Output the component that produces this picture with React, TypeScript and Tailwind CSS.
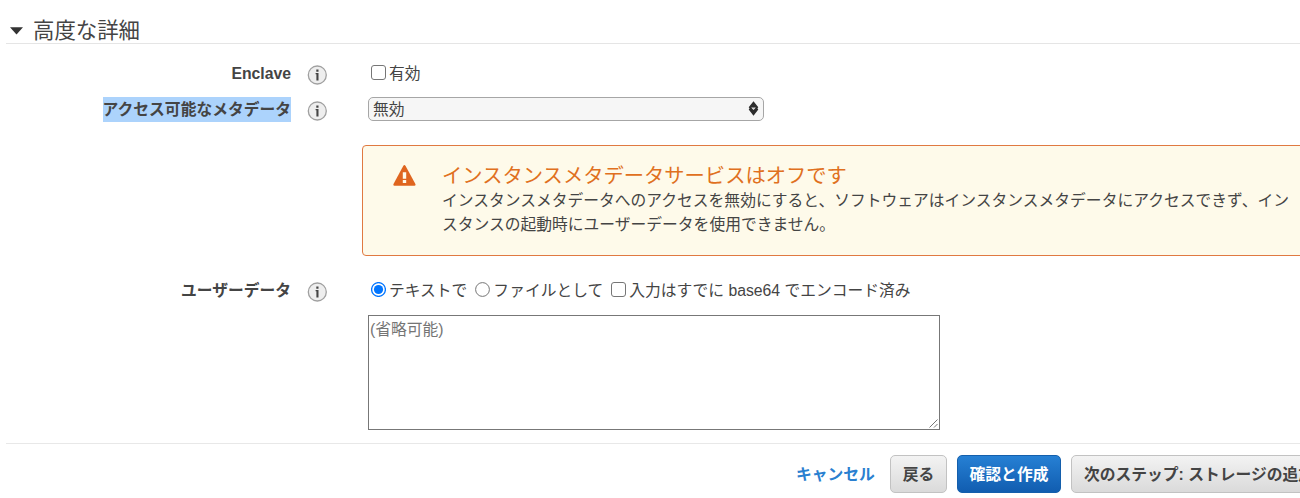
import type { ReactNode } from "react";

function InfoIcon() {
  return (
    <svg className="mt-[3px] ml-4 size-5 shrink-0" viewBox="0 0 20 20" aria-hidden="true">
      <circle cx="10.3" cy="10" r="9" fill="#eeeeee" stroke="#a0a0a0" strokeWidth="1.3" />
      <path d="M8.6 8h2.9v7.4H9.4V9.2H8.6zM9.3 4.6h2.2v2.1H9.3z" fill="#444444" />
    </svg>
  );
}

function Label({ children, selected = false }: { children: ReactNode; selected?: boolean }) {
  return (
    <div className="flex w-[368px] shrink-0 items-center">
      <div className="flex w-[291px] shrink-0 justify-end">
        <span className={selected ? "h-[25px] bg-[#acd3fc] font-bold" : "h-[25px] font-bold"}>{children}</span>
      </div>
      <InfoIcon />
    </div>
  );
}

function CheckBox() {
  return <span className="mb-[2px] box-border size-[15px] shrink-0 rounded-[3px] border border-[#767676] bg-white" />;
}

function Radio({ checked = false }: { checked?: boolean }) {
  return (
    <svg className="mb-[2px] size-[15px] shrink-0" viewBox="0 0 15 15" aria-hidden="true">
      <circle cx="7.5" cy="7.5" r="6.9" fill="#fff" stroke={checked ? "#0075ff" : "#767676"} strokeWidth={checked ? 1.3 : 1} />
      {checked && <circle cx="7.5" cy="7.5" r="4.6" fill="#0075ff" />}
    </svg>
  );
}

const grayButton =
  "flex h-[38px] shrink-0 items-center justify-center rounded-[5px] border border-[#c2c2c2] bg-linear-to-b from-[#f3f3f3] to-[#dadada]";

export default function App() {
  return (
    <div className="flex h-[498px] w-full flex-col overflow-hidden bg-white font-['Liberation_Sans','Noto_Sans_CJK_JP',sans-serif] text-[15.78px] leading-[25px] whitespace-nowrap text-[#444444]">
      <header className="ml-1.5 flex h-11 shrink-0 items-center border-b border-[#e5e5e5] pt-[18px] pl-1">
        <svg className="mr-[10px] h-[8px] w-[13px]" viewBox="0 0 13 8" aria-hidden="true">
          <path d="M0 0.3h13L6.5 7.5z" fill="#333333" />
        </svg>
        <h1 className="pt-[2px] text-[21.4px]">高度な詳細</h1>
      </header>

      <div className="mt-[17px] flex h-[25px] shrink-0 items-center">
        <Label>Enclave</Label>
        <label className="flex items-center gap-[3px] pl-[3px]">
          <CheckBox />
          有効
        </label>
      </div>

      <div className="mt-[11px] flex h-[25px] shrink-0 items-start">
        <Label selected>アクセス可能なメタデータ</Label>
        <div className="flex h-[24px] w-[396px] items-center justify-between rounded-[5px] border border-[#a6a6a6] bg-[#f6f6f6] pr-1 pl-1">
          <span className="pt-[1px]">無効</span>
          <svg className="mb-[2px] h-[15px] w-[11px]" viewBox="0 0 11 15" aria-hidden="true">
            <path d="M5.5 0.2L10.3 6.2 9.4 7.3 10.3 8.6 5.5 14.8 .7 8.6 1.6 7.3 .7 6.2z" fill="#2d2d2d" />
            <path d="M3.2 6.4h4.6L5.5 9z" fill="#eeeeee" />
            <path d="M4.4 6.2h2.2L5.5 7.4z" fill="#777777" />
          </svg>
        </div>
      </div>

      <section className="mt-[23px] ml-[362px] flex h-[111px] w-[1000px] shrink-0 rounded-[4px] border border-[#e07941] bg-[#fefaea] pt-[18px] pl-[30px]">
        <svg className="mt-[1px] mr-[26px] h-[21px] w-[23px] shrink-0" viewBox="0 0 23 21" aria-hidden="true">
          <path d="M10.2.9Q11.4-.8 12.6.9L22.4 19Q23 20.7 21.4 20.7H1.5Q-.1 20.7.5 19z" fill="#df651f" />
          <path d="M9.8 7.2h3.4v6.5H9.8zM9.8 15h3.4v3H9.8z" fill="#fefaea" />
        </svg>
        <div>
          <h2 className="text-[20.3px] text-[#e07020]">インスタンスメタデータサービスはオフです</h2>
          <p className="leading-[24px]">
            インスタンスメタデータへのアクセスを無効にすると、ソフトウェアはインスタンスメタデータにアクセスできず、イン
            <br />
            スタンスの起動時にユーザーデータを使用できません。
          </p>
        </div>
      </section>

      <div className="mt-[22px] flex h-[25px] shrink-0 items-center">
        <Label>ユーザーデータ</Label>
        <div className="flex items-center gap-2 pl-[3px]">
          <label className="flex items-center gap-[3px]"><Radio checked />テキストで</label>
          <label className="flex items-center gap-[3px]"><Radio />ファイルとして</label>
          <label className="flex items-center gap-[3px]"><CheckBox />入力はすでに base64 でエンコード済み</label>
        </div>
      </div>

      <div className="mt-3 ml-[368px] flex h-[115px] w-[572px] shrink-0 items-start justify-between border border-[#777777] pt-[1px] pl-[1px] text-[#757575]">
        (省略可能)
        <svg className="mr-[1px] mb-[1px] size-[9px] self-end" viewBox="0 0 9 9" aria-hidden="true">
          <path d="M.5 8.5l8-8M5 8.5l3.5-3.5" fill="none" stroke="#666666" strokeWidth="0.9" />
        </svg>
      </div>

      <footer className="mt-[13px] ml-1.5 flex h-[55px] shrink-0 items-start border-t border-[#e8e8e8] pt-[11px] font-bold">
        <a className="ml-[790px] flex h-[38px] w-[79px] shrink-0 items-center text-[#2a80d0]">キャンセル</a>
        <button className={`${grayButton} ml-[15px] w-[57px]`}>戻る</button>
        <button className="ml-[10px] flex h-[38px] w-[104px] shrink-0 items-center justify-center rounded-[5px] border border-[#145fac] bg-linear-to-b from-[#2680d4] to-[#115db0] text-white">
          確認と作成
        </button>
        <button className={`${grayButton} ml-[10px] w-[260px] !justify-start pl-3`}>次のステップ: ストレージの追加</button>
      </footer>
    </div>
  );
}
